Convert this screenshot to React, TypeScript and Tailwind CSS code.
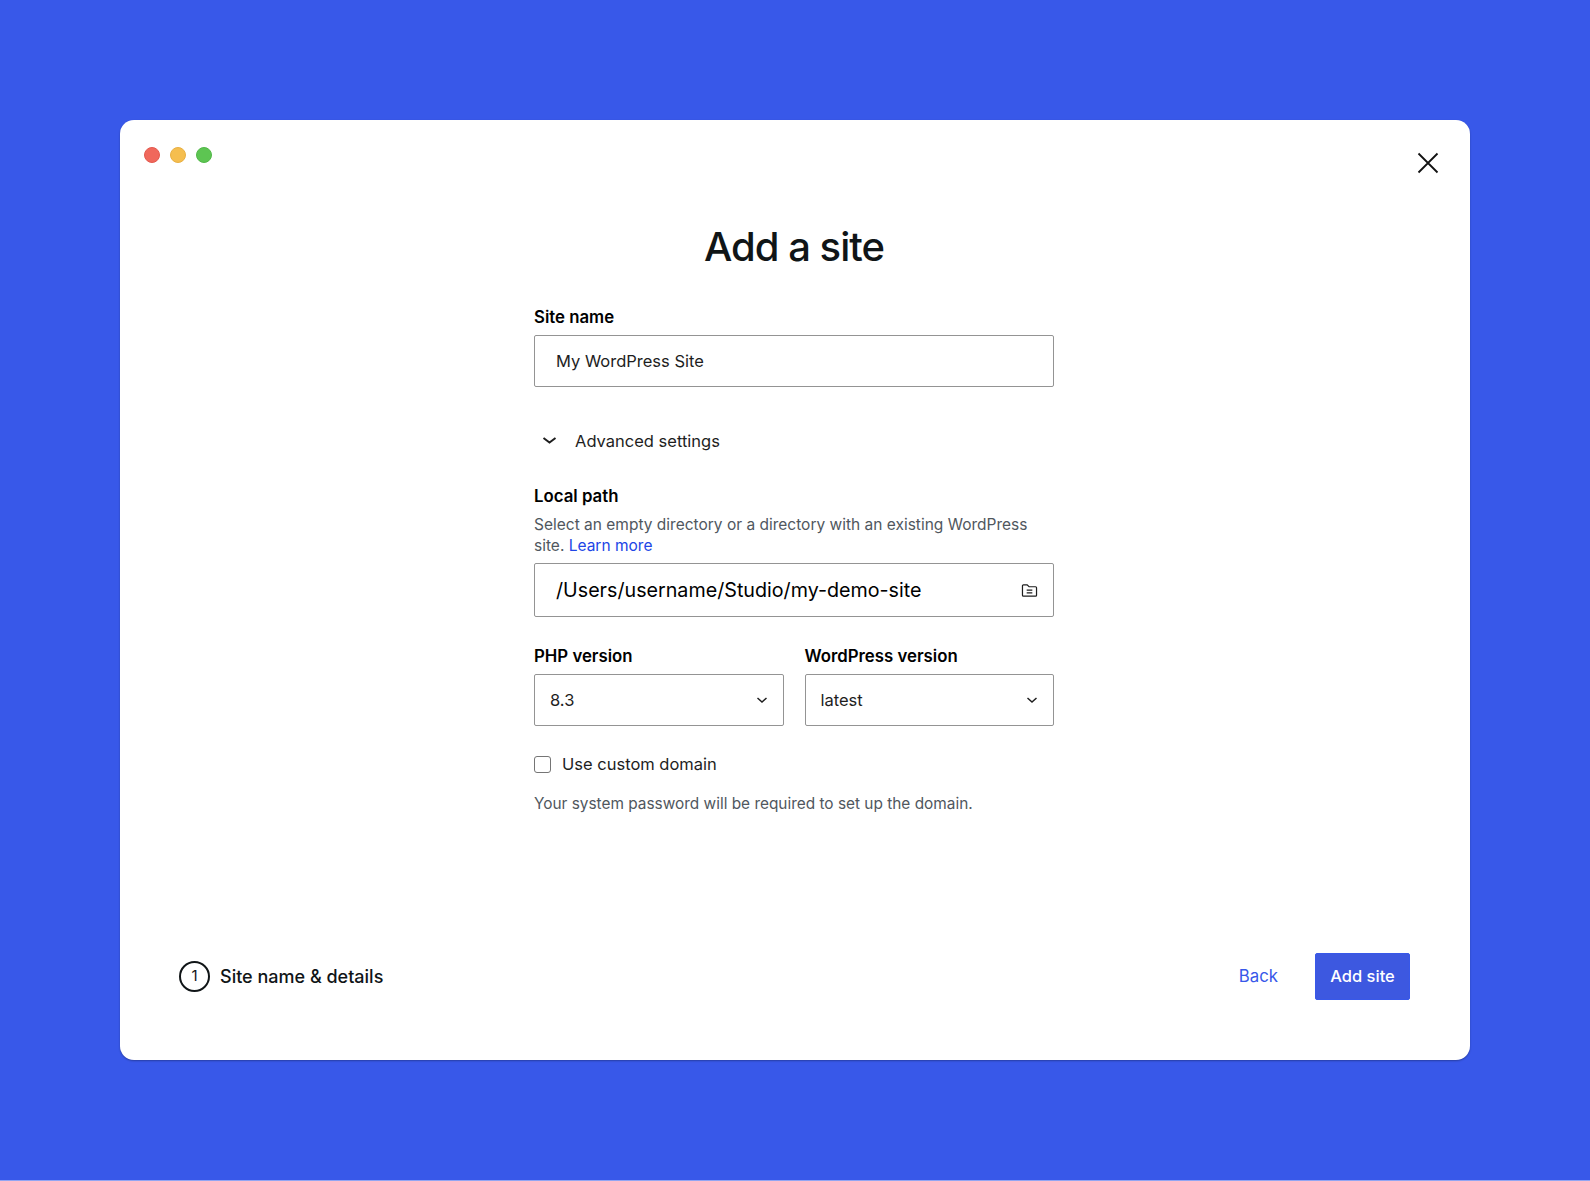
import React from "react";

function Field({ label, children }: { label: string; children: React.ReactNode }) {
  return (
    <div className="flex flex-col flex-1 min-w-0">
      <label className="text-[16.8px] leading-[24px] font-semibold text-black mb-[6px]">{label}</label>
      {children}
    </div>
  );
}

function SelectBox({ value }: { value: string }) {
  return (
    <div className="h-[52px] flex items-center justify-between pl-[15px] pr-[13px] border border-[#949494] rounded-[2px] text-[16.5px] text-[#1e1e1e]">
      <span>{value}</span>
      <svg width="16" height="16" viewBox="0 0 16 16" fill="none" stroke="#1e1e1e" strokeWidth="1.5">
        <path d="M3.5 6 8 10l4.5-4" />
      </svg>
    </div>
  );
}

export default function App() {
  return (
    <div
      className="min-h-[1181px] bg-[#3858e9] border-b border-[#91a5f3] flex justify-center pt-[120px] text-[#1e1e1e]"
      style={{ fontFamily: "Inter, 'Noto Sans', sans-serif" }}
    >
      <div className="w-[1350px] h-[940px] bg-white rounded-[14px] shadow-[0_1px_2px_rgba(0,0,0,0.3)] flex flex-col">
        <div className="flex justify-between pl-[24px] pr-[31px] pt-[27px] h-[90px]">
          <div className="flex gap-[10px]">
            <span className="w-[16px] h-[16px] rounded-full bg-[#f0685c] border border-[#e4594e]" />
            <span className="w-[16px] h-[16px] rounded-full bg-[#f5be4f] border border-[#e9b042]" />
            <span className="w-[16px] h-[16px] rounded-full bg-[#5dc552] border border-[#52b848]" />
          </div>
          <svg className="mt-[5px]" width="22" height="22" viewBox="0 0 22 22" fill="none" stroke="#111" strokeWidth="1.8">
            <path d="M1.5 1.5 20.5 20.5M20.5 1.5 1.5 20.5" />
          </svg>
        </div>

        <h1 className="text-[40px] leading-[48px] font-medium text-center text-[#101517] tracking-[-1px] mt-[13px] pr-[2px]">
          Add a site
        </h1>

        <div className="w-[520px] ml-[414px] mt-[34px] flex flex-col">
          <Field label="Site name">
            <div className="h-[52px] flex items-center pl-[21px] pt-[1px] border border-[#949494] rounded-[2px] text-[16.5px]">
              My WordPress Site
            </div>
          </Field>

          <div className="flex items-center mt-[41px] h-[26px] pl-[7px] text-[16.5px]">
            <svg width="18" height="18" viewBox="0 0 18 18" fill="none" stroke="#1e1e1e" strokeWidth="2">
              <path d="M2.5 6 8.5 10.5 14.5 6" />
            </svg>
            <span className="ml-[16px]">Advanced settings</span>
          </div>

          <label className="text-[16.8px] leading-[24px] font-semibold text-black mt-[30px]">Local path</label>
          <p className="text-[15.5px] leading-[20.5px] text-[#50575e] mt-[7px] mb-[7px]">
            Select an empty directory or a directory with an existing WordPress site.{" "}
            <span className="text-[#2145e6]">Learn more</span>
          </p>
          <div className="h-[54px] flex items-center justify-between pl-[21px] pt-[1px] pr-[15px] border border-[#949494] rounded-[2px] text-[19.7px] text-black">
            <span>/Users/username/Studio/my-demo-site</span>
            <svg width="17" height="15" viewBox="0 0 18 16" fill="none" stroke="#1e1e1e" strokeWidth="1.3">
              <path d="M1.5 13V3a1 1 0 0 1 1-1h4l2 2h7a1 1 0 0 1 1 1v8a1 1 0 0 1-1 1h-13a1 1 0 0 1-1-1Z" />
              <path d="M6 7.5h6M6 10.5h6" />
            </svg>
          </div>

          <div className="flex gap-[21px] mt-[27px]">
            <Field label="PHP version">
              <SelectBox value="8.3" />
            </Field>
            <Field label="WordPress version">
              <SelectBox value="latest" />
            </Field>
          </div>

          <div className="flex items-center mt-[26px] h-[24px] text-[16.5px]">
            <span className="w-[17px] h-[17px] border border-[#757575] rounded-[3px]" />
            <span className="ml-[11px]">Use custom domain</span>
          </div>
          <p className="text-[15.4px] leading-[20px] text-[#50575e] mt-[18px]">
            Your system password will be required to set up the domain.
          </p>
        </div>

        <div className="mt-auto mb-[60px] pl-[59px] pr-[60px] flex items-center justify-between">
          <div className="flex items-center">
            <span className="w-[31px] h-[31px] rounded-full border-[2.5px] border-[#101517] flex items-center justify-center text-[15px] text-[#101517]">
              1
            </span>
            <span className="ml-[10px] text-[18px] font-medium text-[#101517]">Site name &amp; details</span>
          </div>
          <div className="flex items-center">
            <span className="text-[16.8px] text-[#3858e9] mr-[37px] pt-[1px]">Back</span>
            <span className="w-[95px] h-[47px] flex items-center justify-center bg-[#3d58e0] border border-[#3858e9] rounded-[2px] text-white text-[16.5px] font-medium">
              Add site
            </span>
          </div>
        </div>
      </div>
    </div>
  );
}
